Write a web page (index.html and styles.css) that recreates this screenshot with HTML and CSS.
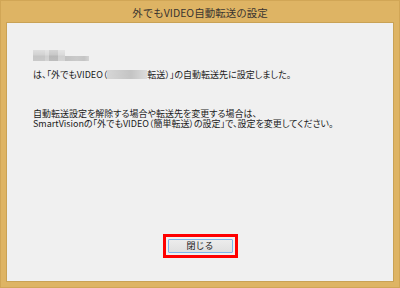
FILE: index.html
```html
<!DOCTYPE html>
<html>
<head>
    <meta charset="UTF-8">
    <title>外でもVIDEO自動転送の設定</title>
    <link rel="stylesheet" href="styles.css">
</head>
<body>
    <div class="window">
        <div class="titlebar">外でもVIDEO自動転送の設定</div>
        <div class="client">
            <!-- ぼかした機器名 -->
            <div class="name-blur">
                <span class="blob tall" style="width: 12px"></span>
                <span class="blob tall pale" style="width: 4px"></span>
                <span class="blob tall deep" style="width: 9px"></span>
                <span class="blob tall pale" style="width: 7px"></span>
                <span class="blob short" style="width: 24px"></span>
            </div>
            <p class="msg">は、「外でもVIDEO（<span class="inline-blur"></span>転送）」の自動転送先に設定しました。</p>
            <p class="msg note">自動転送設定を解除する場合や転送先を変更する場合は、<br>SmartVisionの「外でもVIDEO（簡単転送）の設定」で、設定を変更してください。</p>
            <div class="actions">
                <div class="highlight">
                    <button class="close-button">閉じる</button>
                </div>
            </div>
        </div>
    </div>
</body>
</html>
```

FILE: styles.css
```css
body {
    margin: 0;
    padding: 0;
    font-family: "Noto Sans CJK JP", "Noto Sans", sans-serif;
}
.window {
    width: 400px;
    height: 288px;
    box-sizing: border-box;
    background-color: #deb464;
    border: 1px solid #d1a656;
    display: flex;
    flex-direction: column;
}
.titlebar {
    height: 21px;
    line-height: 23px;
    text-align: center;
    font-size: 10.5px;
    color: #3a3430;
}
.client {
    flex: 1;
    margin: 0 5px 5px;
    background-color: #f0f0f0;
    border: 1px solid #c9a255;
    display: flex;
    flex-direction: column;
    padding: 0 0 0 26px;
    color: #1a1a1a;
}
.name-blur {
    display: flex;
    align-items: flex-end;
    height: 11px;
    margin-top: 27px;
    filter: blur(0.5px);
}
.blob {
    display: block;
}
.blob.tall {
    height: 11px;
    background: linear-gradient(#dedede, #d2d2d2 45%, #c6c6c6 55%, #c9c9c9);
}
.blob.tall.pale {
    background: linear-gradient(#e4e4e4, #dadada 45%, #d0d0d0 55%, #d4d4d4);
}
.blob.tall.deep {
    background: linear-gradient(#d4d4d4, #c8c8c8 45%, #b8b8b8 55%, #bdbdbd);
}
.blob.short {
    height: 5px;
    background: linear-gradient(to right, #c2c2c2, #cacaca 50%, #c4c4c4 80%, #d4d4d4);
}
.msg {
    margin: 9px 0 0;
    font-size: 9px;
    line-height: 10px;
    font-feature-settings: "palt";
    white-space: nowrap;
}
.inline-blur {
    display: inline-block;
    width: 40px;
    height: 9px;
    vertical-align: -1px;
    background: linear-gradient(to right, #d6d6d6, #c4c4c4 60%, #dcdcdc);
    filter: blur(0.6px);
}
.note {
    margin-top: 29px;
}
.actions {
    margin-top: auto;
    margin-bottom: 23px;
    margin-left: -26px;
    display: flex;
    justify-content: center;
}
.highlight {
    border: 3px solid #ff0000;
    padding: 2px;
}
.close-button {
    display: block;
    width: 65px;
    height: 14px;
    padding: 0;
    border: 1px solid #7eb4ea;
    border-radius: 1px;
    background: linear-gradient(#ececec, #e0e0e0);
    font-family: inherit;
    font-size: 9px;
    line-height: 12px;
    color: #1a1a1a;
}
```
